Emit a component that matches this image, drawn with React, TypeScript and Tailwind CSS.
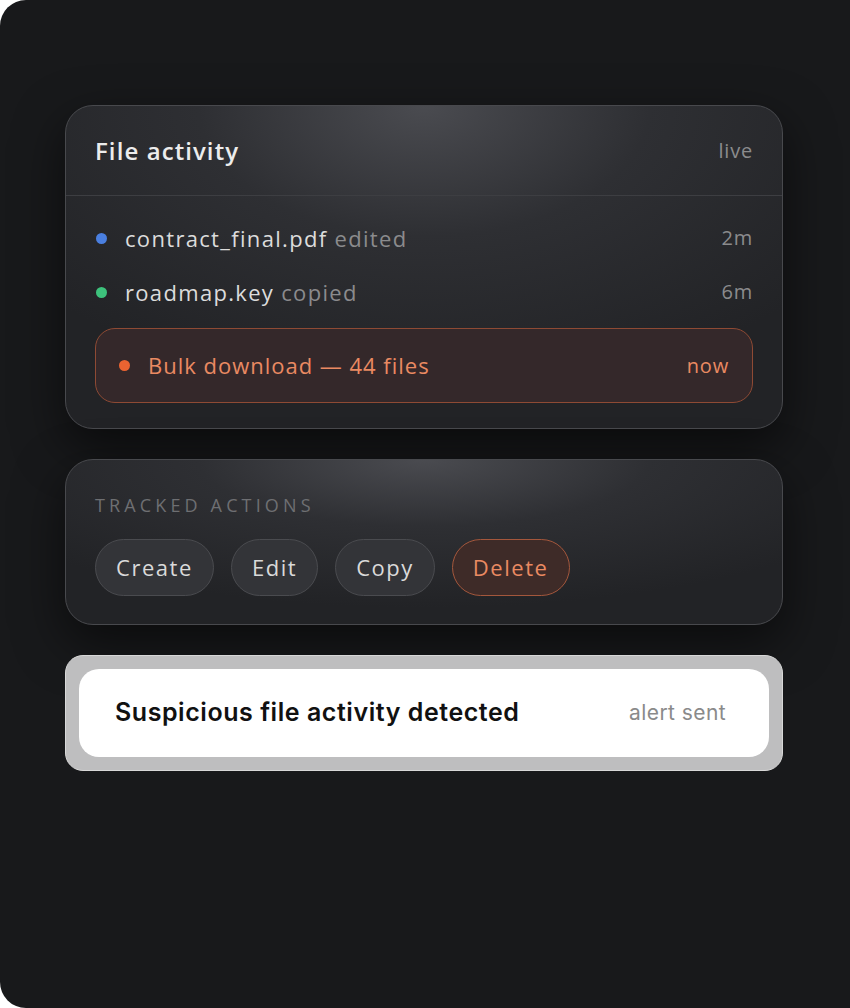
import React from "react"

const font = { fontFamily: "'Open Sans', 'Noto Sans', sans-serif" }
const inter = { fontFamily: "Inter, 'Noto Sans', sans-serif" }

const cardBg =
    "bg-[radial-gradient(ellipse_70%_90%_at_50%_0%,#4a4b50_0%,#2e2f33_45%,#222326_100%)]"

const rows = [
    { dot: "bg-[#4a7fe0]", name: "contract_final.pdf", action: "edited", time: "2m" },
    { dot: "bg-[#3dc27c]", name: "roadmap.key", action: "copied", time: "6m" },
]

const actions = ["Create", "Edit", "Copy"]

export default function App() {
    return (
        <div className="h-[1008px] w-[850px] bg-white" style={font}>
            <div className="flex h-full w-full flex-col gap-[30px] rounded-l-[26px] bg-[#18191b] pl-[65px] pr-[67px] pt-[105px]">
                <div className={`flex flex-col rounded-[28px] border border-[#48494d] ${cardBg} shadow-[0_18px_50px_rgba(0,0,0,0.55)]`}>
                    <div className="flex h-[90px] items-center justify-between border-b border-[#3d3e42] px-[29px]">
                        <h1 className="text-[24px] font-semibold tracking-[0.045em] text-[#ececec]">File activity</h1>
                        <span className="text-[20px] tracking-[0.04em] text-[#8b8b8d]">live</span>
                    </div>
                    <div className="flex flex-col px-[29px] pb-[25px] pt-[15px]">
                        {rows.map(row => (
                            <div key={row.name} className="flex h-[54px] items-center">
                                <span className={`ml-[1px] h-[11px] w-[11px] rounded-full ${row.dot}`} />
                                <span className="ml-[18px] flex-1 text-[22px] tracking-[0.06em] text-[#dcdcdc]">
                                    {row.name} <span className="text-[#8b8b8d]">{row.action}</span>
                                </span>
                                <span className="text-[20px] tracking-[0.04em] text-[#8b8b8d]">{row.time}</span>
                            </div>
                        ))}
                        <div className="mt-[9px] flex h-[75px] items-center rounded-[20px] border border-[#8e4a34] bg-[#34282a] px-[23px]">
                            <span className="h-[11px] w-[11px] rounded-full bg-[#ea6331]" />
                            <span className="ml-[18px] flex-1 text-[22px] tracking-[0.045em] text-[#ea8a62]">Bulk download — 44 files</span>
                            <span className="text-[20px] tracking-[0.04em] text-[#ea8a62]">now</span>
                        </div>
                    </div>
                </div>

                <div className={`flex flex-col rounded-[28px] border border-[#48494d] ${cardBg} px-[29px] pb-[28px] pt-[32px] shadow-[0_18px_50px_rgba(0,0,0,0.55)]`}>
                    <p className="text-[18px] uppercase tracking-[0.23em] text-[#6e6f72]">Tracked actions</p>
                    <div className="mt-[20px] flex gap-[17px]">
                        {actions.map(a => (
                            <span key={a} className="flex h-[57px] items-center rounded-full border border-[#4a4b4f] bg-[#333438] px-[20px] text-[22px] tracking-[0.07em] text-[#dadada]">
                                {a}
                            </span>
                        ))}
                        <span className="flex h-[57px] items-center rounded-full border border-[#a4573c] bg-[#3e2b28] px-[20px] text-[22px] tracking-[0.07em] text-[#ea8a62]">
                            Delete
                        </span>
                    </div>
                </div>

                <div className="rounded-[18px] border border-[#d8d8d8] bg-[#bebebf] p-[13px]">
                    <div className="flex h-[88px] items-center justify-between rounded-[20px] bg-white pl-[36px] pr-[43px]" style={inter}>
                        <span className="text-[25px] font-semibold tracking-[0.022em] text-[#111111]">Suspicious file activity detected</span>
                        <span className="text-[21px] tracking-[0.02em] text-[#8a8a8a]">alert sent</span>
                    </div>
                </div>
            </div>
        </div>
    )
}
